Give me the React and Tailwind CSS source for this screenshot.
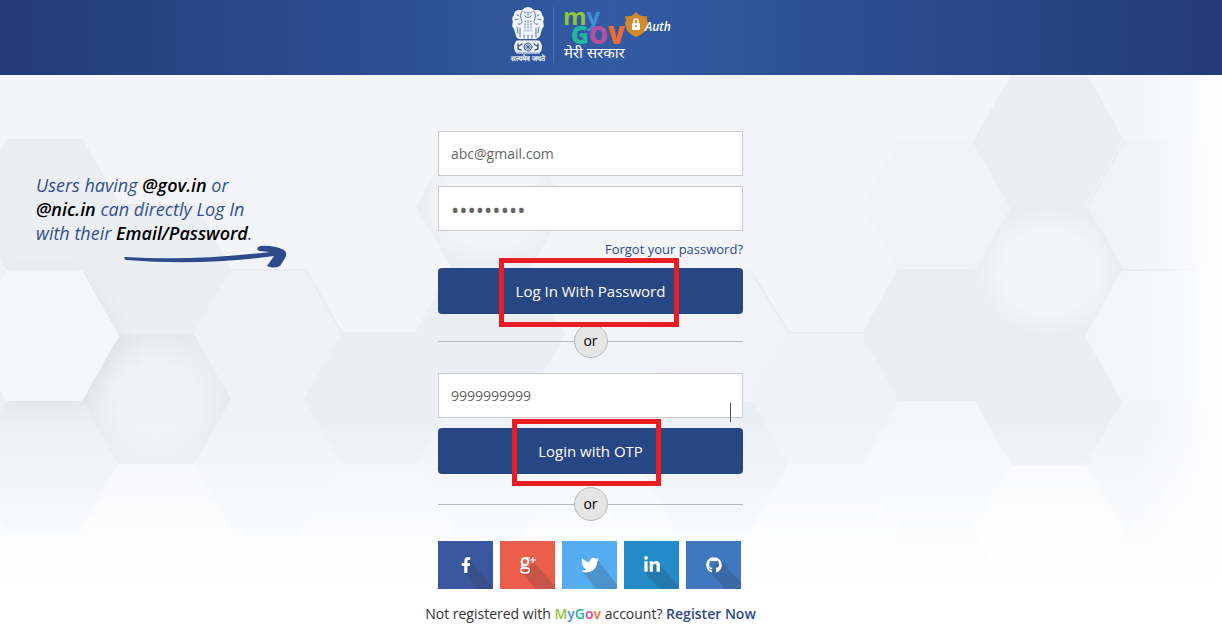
import React from "react";
import { FaFacebookF, FaTwitter, FaLinkedinIn, FaGithub } from "react-icons/fa";

const hexes = [
  // [cx, cy, fill]
  [44, 205, "#ebeff3"],
  [44, 466, "#eceff4"],
  [156, 269, "#ebeff4"],
  [268, 205, "#f2f4f8"],
  [268, 335, "#eff2f7"],
  [268, 465, "#eff2f6"],
  [379, 399, "#ebeff3"],
  [379, 529, "#f2f4f8"],
  [491, 336, "#ebeff3"],
  [491, 466, "#eff2f6"],
  [603, 399, "#f1f4f8"],
  [714, 336, "#f1f3f7"],
  [714, 466, "#ebeff3"],
  [826, 399, "#eff3f7"],
  [826, 529, "#f3f5f9"],
  [937, 206, "#f1f3f7"],
  [937, 336, "#ebeff3"],
  [937, 596, "#eff1f4"],
  [1049, 142, "#ebeff3"],
  [1049, 402, "#ebeff3"],
  [1160, 206, "#f1f3f7"],
  [1160, 466, "#f1f3f8"],
  [1160, 596, "#eff1f4"],
];

function hexPath(cx, cy) {
  return `M${cx - 75} ${cy}L${cx - 38} ${cy - 65}H${cx + 38}L${cx + 75} ${cy}L${cx + 38} ${cy + 65}H${cx - 38}Z`;
}

function Backdrop() {
  return (
    <svg
      className="absolute inset-0 h-full w-full"
      viewBox="0 75 1222 551"
      preserveAspectRatio="xMidYMin slice"
      aria-hidden="true"
    >
      <defs>
        <linearGradient id="fadeDown" x1="0" y1="0" x2="0" y2="1">
          <stop offset="0.62" stopColor="#fff" stopOpacity="0" />
          <stop offset="0.78" stopColor="#fff" stopOpacity="0.55" />
          <stop offset="0.93" stopColor="#fff" stopOpacity="1" />
        </linearGradient>
        <linearGradient id="fadeRight" x1="0" y1="0" x2="1" y2="0">
          <stop offset="0.93" stopColor="#fff" stopOpacity="0" />
          <stop offset="1" stopColor="#fff" stopOpacity="0.9" />
        </linearGradient>
        <radialGradient id="dip">
          <stop offset="0.55" stopColor="#eff2f7" />
          <stop offset="1" stopColor="#e7e9ed" />
        </radialGradient>
        <radialGradient id="dipLight">
          <stop offset="0.6" stopColor="#f3f5f9" />
          <stop offset="1" stopColor="#ebedf1" />
        </radialGradient>
        <filter id="shadow" x="-30%" y="-30%" width="160%" height="160%">
          <feDropShadow dx="0" dy="6" stdDeviation="14" floodColor="#8a8f9c" floodOpacity="0.14" />
        </filter>
      </defs>
      <rect y="75" width="1222" height="551" fill="#f3f5f9" />
      {hexes.map(([cx, cy, fill]) => (
        <path key={`${cx}-${cy}`} d={hexPath(cx, cy)} fill={fill} />
      ))}
      <path d={hexPath(156, 399)} fill="url(#dip)" />
      <path d={hexPath(491, 206)} fill="url(#dipLight)" />
      <path d={hexPath(1049, 272)} fill="url(#dipLight)" />
      <path d={hexPath(44, 336)} fill="#f5f7fa" filter="url(#shadow)" />
      <path d={hexPath(156, 529)} fill="#f5f6f9" />
      <path d={hexPath(937, 466)} fill="#f4f6fa" />
      <path d={hexPath(1160, 336)} fill="#f4f6fa" />
      <path d={hexPath(1049, 531)} fill="#f7f8fa" />
      <g fill="none" stroke="#ebedf1" strokeWidth="2">
        <path d="M6 140H82L119 205H194L230 270H306L342 333H416L440 290" />
        <path d="M751 271L789 333H864L898 270H974" />
        <path d="M1011 207L974 142L1011 77H1087L1124 142L1087 207L1122 270H1197" />
      </g>
      <rect y="75" width="1222" height="551" fill="url(#fadeDown)" />
      <rect y="75" width="1222" height="551" fill="url(#fadeRight)" />
    </svg>
  );
}

function Emblem() {
  return (
    <svg className="h-12 w-9" viewBox="0 0 36 48" aria-hidden="true">
      <g fill="#f2f6ff">
        <path d="M12 3Q15 0 18 0T24 3L28 3Q32 4 32 8Q35 11 33 15Q35 19 32 22L30 29Q27 33 24 32H12Q8 33 6 29L4 22Q1 19 3 15Q1 11 4 8Q4 4 8 3Z" />
        <path d="M7 33H29L31 36Q33 40 31 44L29 47H7L5 44Q3 40 5 36Z" />
      </g>
      <g fill="none" stroke="#3159a0" strokeWidth="0.8" strokeLinecap="round">
        <path d="M14 5L16 6M20 6L22 5M15 9Q18 12 21 9M18 5V8M12 4Q9 9 12 14M24 4Q27 9 24 14" />
        <path d="M7 8L9 9M5 13L8 12M29 8L27 9M31 13L28 12M8 17Q11 18 12 15M28 17Q25 18 24 15" />
        <path d="M15 14V25M18 14V26M21 14V25" strokeDasharray="1 2" />
        <path d="M10 21V30M26 21V30M7 20L8 26M29 20L28 26M14 28V31M22 28V31M18 28V32" />
        <path d="M6 33H30M7 46H29" />
        <circle cx="18" cy="40" r="4" />
        <path d="M18 36V44M14 40H22M15 37L21 43M21 37L15 43" />
        <path d="M8 37V42L11 43M12 37L9 39M28 37V42L25 43M24 37L27 39" strokeWidth="1.4" />
      </g>
    </svg>
  );
}

function Logo() {
  return (
    <a href="#" aria-label="MyGov Auth" className="flex items-start">
      <div className="flex h-14 w-11 justify-start border-r border-[#4a70b4]">
        <div className="flex flex-col items-center">
          <Emblem />
          <span className="text-[7px] leading-[8px] font-bold whitespace-nowrap text-white">सत्यमेव जयते</span>
        </div>
      </div>
      <svg className="h-14 w-[118px] overflow-visible" viewBox="554 7 118 56">
        <g fontFamily="Open Sans, sans-serif" fontWeight="700">
          <text x="563" y="25" fontSize="24" fill="#8dc63f">
            m<tspan fill="#3f8fd2">y</tspan>
          </text>
          <text x="571" y="44" fontSize="24" fontWeight="800" fill="#1fb5a0">
            G<tspan fill="#b74fa0">O</tspan>
            <tspan fill="#f26a2e">V</tspan>
          </text>
        </g>
        <text x="564" y="58" fontSize="15" fill="#fff" fontFamily="Noto Sans, sans-serif">मेरी सरकार</text>
        <path
          d="M636 12L639 15Q643 17 647 16L647 20L648 23L647 28Q644 34 636 37Q628 34 626 28L625 23L626 20L625 16Q630 17 633 15Z"
          fill="#d18a2a"
        />
        <rect x="632" y="23" width="8" height="7" rx="1" fill="#fff" />
        <path d="M634 23V21Q634 19 636 19T638 21V23" fill="none" stroke="#fff" strokeWidth="1.5" />
        <circle cx="636" cy="26" r="1" fill="#d18a2a" />
        <text x="645" y="31" fontSize="12" fontStyle="italic" fontWeight="600" fill="#fff" fontFamily="Segoe Script, Open Sans, cursive">
          Auth
        </text>
      </svg>
    </a>
  );
}

function Note() {
  return (
    <aside className="pt-[42px] pl-9">
      <p className="text-[18px] leading-6 text-[#33508f] italic">
        Users having <b className="font-semibold text-black">@gov.in</b> or
        <br />
        <b className="font-semibold text-black">@nic.in</b> can directly Log In
        <br />
        with their <b className="font-semibold text-black">Email/Password</b>.
      </p>
      <svg className="ml-[88px] h-6 w-[163px]" viewBox="124 246 163 24" aria-hidden="true">
        <path
          d="M125 258Q195 262 270 253L259 252Q255 249 260 247Q273 246 284 251Q288 254 285 259L280 267Q274 270 267 267L274 257Q200 267 126 261Q123 259 125 258Z"
          fill="#2c4a8c"
        />
      </svg>
    </aside>
  );
}

function TextField({ label, size = "text-sm", ...props }) {
  return (
    <input
      aria-label={label}
      className={`block h-[45px] w-full border border-[#ccc] bg-white px-3 text-[#666] outline-none ${size}`}
      {...props}
    />
  );
}

function SubmitButton({ children }) {
  return (
    <button type="submit" className="block h-[46px] w-full rounded bg-[#274684] text-[15px] text-white">
      {children}
    </button>
  );
}

function OrDivider() {
  return (
    <div className="flex items-center">
      <span className="h-px flex-1 bg-[#b9bbc1]" />
      <span className="flex size-[34px] items-center justify-center rounded-full border border-[#b9bbc1] bg-[#e5e5e5] text-sm leading-4 text-black">
        or
      </span>
      <span className="h-px flex-1 bg-[#b9bbc1]" />
    </div>
  );
}

function GooglePlus() {
  return (
    <svg className="h-5 w-5" viewBox="0 0 20 20" fill="none" stroke="currentColor">
      <ellipse cx="7" cy="6.500" rx="3.300" ry="3.500" strokeWidth="2" />
      <path d="M8 3H12" strokeWidth="1.300" />
      <path d="M4.500 9.500Q2.500 11.500 5 12.300L9 13" strokeWidth="1.800" />
      <ellipse cx="7" cy="15.300" rx="4.300" ry="2.700" strokeWidth="1.600" />
      <path d="M15 2V8M12 5H18" strokeWidth="1.200" />
    </svg>
  );
}

const socials = [
  { name: "Facebook", bg: "bg-[#3b589e]", icon: <FaFacebookF className="size-4" />, shade: "M26 31L31 18L55 46V48H40Z" },
  { name: "Google Plus", bg: "bg-[#eb5e4c]", icon: <GooglePlus />, shade: "M22 32L34 21L55 45V48H36Z" },
  { name: "Twitter", bg: "bg-[#55acee]", icon: <FaTwitter className="size-[18px]" />, shade: "M20 30L35 18L55 44V48H34Z" },
  { name: "LinkedIn", bg: "bg-[#238cc8]", icon: <FaLinkedinIn className="size-[18px]" />, shade: "M20 31L34 22L55 45V48H36Z" },
  { name: "GitHub", bg: "bg-[#4078c0]", icon: <FaGithub className="size-4" />, shade: "M23 30L34 18L55 42V48H39Z" },
];

function SocialLinks() {
  return (
    <div className="flex gap-[7px]">
      {socials.map((s) => (
        <a
          key={s.name}
          href="#"
          aria-label={s.name}
          className={`relative flex h-12 w-[55px] items-center justify-center text-white ${s.bg}`}
        >
          <svg className="absolute inset-0 h-full w-full" viewBox="0 0 55 48" aria-hidden="true">
            <path d={s.shade} fill="#2c2c34" fillOpacity="0.19" />
          </svg>
          <span className="relative">{s.icon}</span>
        </a>
      ))}
    </div>
  );
}

export default function App() {
  return (
    <div className="flex min-h-screen flex-col bg-white font-['Open_Sans',sans-serif]">
      <header className="flex h-[75px] justify-center bg-linear-to-r from-[#233b77] via-[#325ba3] to-[#233b77] pt-[7px] pr-10">
        <Logo />
      </header>

      <main className="relative flex-1 overflow-hidden">
        <Backdrop />
        <div className="relative grid grid-cols-[1fr_305px_1fr] pt-14 pr-[41px]">
          <Note />

          <div>
            <form className="flex flex-col" onSubmit={(e) => e.preventDefault()}>
              <div className="flex flex-col gap-[10px]">
                <TextField label="Email" type="email" defaultValue="abc@gmail.com" />
                <TextField label="Password" type="password" size="text-[22px]" defaultValue="123456789" />
              </div>
              <div className="flex h-[37px] items-center justify-end">
                <a href="#" className="text-[13px] text-[#2c4a8c]">
                  Forgot your password?
                </a>
              </div>
              <div className="relative">
                <SubmitButton>Log In With Password</SubmitButton>
                <span className="pointer-events-none absolute -top-[10px] left-[61px] z-10 h-[69px] w-[180px] border-5 border-[#ea1c24]" />
              </div>
            </form>

            <div className="pt-[10px] pb-[15px]">
              <OrDivider />
            </div>

            <form className="flex flex-col gap-[10px]" onSubmit={(e) => e.preventDefault()}>
              <div className="relative">
                <TextField label="Mobile number" type="tel" defaultValue="9999999999" />
                <span className="absolute top-[30px] left-[292px] h-[19px] w-px bg-[#555]" />
              </div>
              <div className="relative">
                <SubmitButton>Login with OTP</SubmitButton>
                <span className="pointer-events-none absolute -top-[9px] left-[74px] z-10 h-[67px] w-[149px] border-5 border-[#ea1c24]" />
              </div>
            </form>

            <div className="pt-[13px] pb-5">
              <OrDivider />
            </div>

            <SocialLinks />

            <p className="-mx-5 pt-[15px] text-center text-sm whitespace-nowrap text-[#333]">
              Not registered with{" "}
              <b className="font-semibold">
                <span className="text-[#8dc63f]">M</span>
                <span className="text-[#4a90d0]">y</span>
                <span className="text-[#1fb5a0]">G</span>
                <span className="text-[#b74fa0]">o</span>
                <span className="text-[#f26a2e]">v</span>
              </b>{" "}
              account?{" "}
              <a href="#" className="font-semibold text-[#2c4a8c]">
                Register Now
              </a>
            </p>
          </div>
        </div>
      </main>
    </div>
  );
}
